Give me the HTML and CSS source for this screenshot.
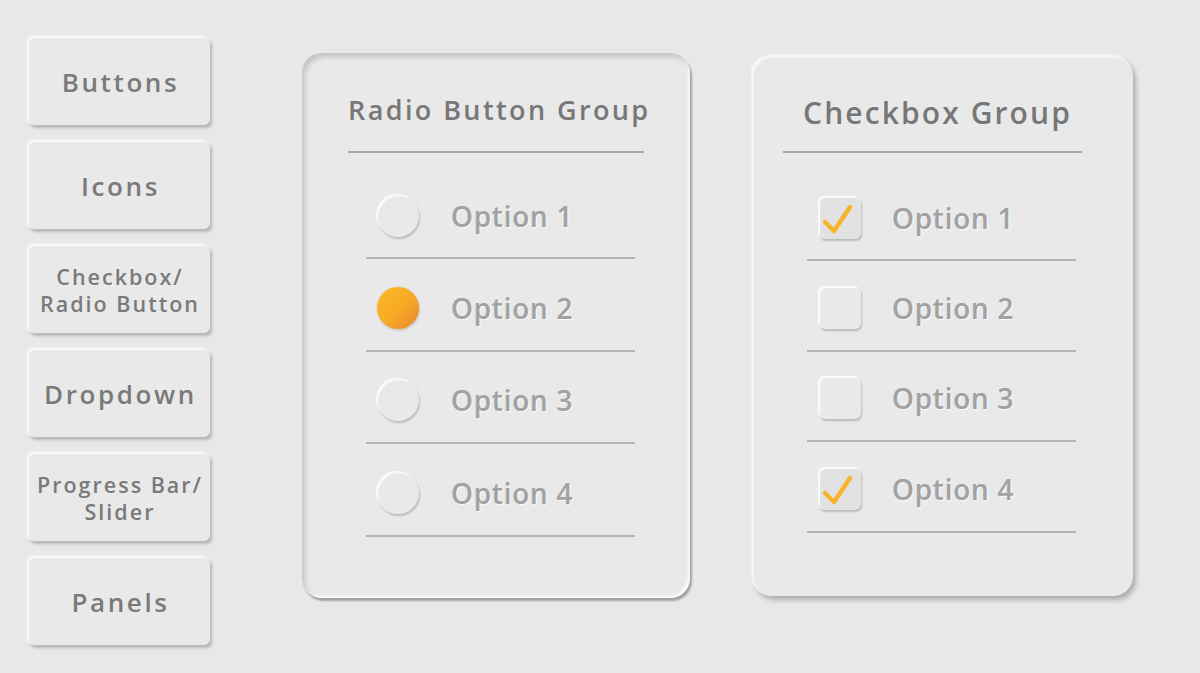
FILE: index.html
```html
<!DOCTYPE html>
<html>
<head>
<meta charset="utf-8">
<link rel="stylesheet" href="styles.css">
</head>
<body>
<div class="page">
  <nav class="sidebar">
    <div class="navbtn big">Buttons</div>
    <div class="navbtn big">Icons</div>
    <div class="navbtn small">Checkbox/<br>Radio Button</div>
    <div class="navbtn big">Dropdown</div>
    <div class="navbtn small">Progress Bar/<br>Slider</div>
    <div class="navbtn big">Panels</div>
  </nav>
  <section class="panel radio-panel">
    <h2 class="title radio-title">Radio Button Group</h2>
    <div class="list radio-list">
      <div class="row"><span class="radio"></span><span class="label">Option 1</span></div>
      <div class="row"><span class="radio on"></span><span class="label">Option 2</span></div>
      <div class="row"><span class="radio"></span><span class="label">Option 3</span></div>
      <div class="row"><span class="radio"></span><span class="label">Option 4</span></div>
    </div>
  </section>
  <section class="panel check-panel">
    <h2 class="title check-title">Checkbox Group</h2>
    <div class="list check-list">
      <div class="row"><span class="check on"><svg viewBox="0 0 42 42" width="42" height="42"><path d="M6 25 L15 34 L31 10" fill="none" stroke="#f7b52c" stroke-width="4.5" stroke-linecap="round" stroke-linejoin="round"/></svg></span><span class="label">Option 1</span></div>
      <div class="row"><span class="check"></span><span class="label">Option 2</span></div>
      <div class="row"><span class="check"></span><span class="label">Option 3</span></div>
      <div class="row"><span class="check on"><svg viewBox="0 0 42 42" width="42" height="42"><path d="M6 25 L15 34 L31 10" fill="none" stroke="#f7b52c" stroke-width="4.5" stroke-linecap="round" stroke-linejoin="round"/></svg></span><span class="label">Option 4</span></div>
    </div>
  </section>
</div>
</body>
</html>
```
FILE: styles.css
```css
* { box-sizing: border-box; }
html, body { margin: 0; padding: 0; }
body {
  width: 1200px;
  height: 673px;
  background: #e8e8e8;
  font-family: "Open Sans", "Noto Sans", sans-serif;
  overflow: hidden;
}
.page {
  display: flex;
  align-items: flex-start;
  padding: 37px 0 0 28px;
}
.sidebar {
  display: flex;
  flex-direction: column;
  gap: 16px;
  width: 182px;
}
.navbtn {
  height: 88px;
  border-radius: 6px;
  background: #e9e9e9;
  box-shadow: 2px 3px 3px rgba(0,0,0,0.22), -1px -1px 2px rgba(255,255,255,0.9), inset 1px 1px 1px rgba(255,255,255,0.8);
  display: flex;
  align-items: center;
  justify-content: center;
  text-align: center;
  color: #7a7a7a;
  font-weight: 600;
  white-space: nowrap;
}
.navbtn.big { font-size: 26px; letter-spacing: 2.6px; padding: 2px 0 0 3px; }
.navbtn.small { font-size: 21.5px; letter-spacing: 2px; line-height: 27px; padding: 2px 0 0 2px; }
.panel {
  border-radius: 20px;
  background: #e9e9e9;
}
.radio-panel {
  margin-left: 92px;
  margin-top: 16px;
  width: 388px;
  height: 545px;
  padding: 0 46px;
  box-shadow: 2px 3px 2px rgba(0,0,0,0.3), inset 3px 4px 5px rgba(0,0,0,0.16), inset -2px -2px 3px rgba(255,255,255,0.9);
}
.check-panel {
  margin-left: 62px;
  margin-top: 19px;
  width: 381px;
  height: 540px;
  padding: 0 51px 0 31px;
  box-shadow: 3px 4px 5px rgba(0,0,0,0.25), -1px -1px 2px rgba(255,255,255,0.9), inset 1px 1px 2px rgba(255,255,255,0.9);
}
.title {
  margin: 0;
  font-weight: 600;
  color: #777;
  text-align: center;
  border-bottom: 2px solid #a8a8a8;
  white-space: nowrap;
}
.radio-title {
  font-size: 27px;
  letter-spacing: 2.4px;
  padding-top: 38px;
  height: 100px;
}
.check-title {
  font-size: 30px;
  letter-spacing: 2.1px;
  padding: 36px 0 0 10px;
  height: 97px;
}
.list { display: flex; flex-direction: column; }
.radio-list { padding: 0 9px 0 18px; }
.check-list { padding: 0 6px 0 24px; }
.row {
  display: flex;
  align-items: center;
  border-bottom: 2px solid #b5b5b5;
}
.radio-list .row { height: 92.5px; padding-left: 11px; padding-top: 7px; }
.radio-list .row:first-child { height: 106px; padding-top: 21px; }
.check-list .row { height: 90.5px; padding-left: 12px; padding-top: 5px; }
.check-list .row:first-child { height: 108px; padding-top: 23px; }
.label {
  font-size: 28px;
  font-weight: 600;
  color: #a2a2a2;
  letter-spacing: 0.7px;
  text-shadow: 1px 1px 1px rgba(255,255,255,0.8), -0.5px -0.5px 0.5px rgba(0,0,0,0.12);
}
.radio {
  width: 42px;
  height: 42px;
  border-radius: 50%;
  background: #e9e9e9;
  margin-right: 32px;
  box-shadow: 1px 2px 2px rgba(0,0,0,0.2), inset 1px 1px 1px rgba(255,255,255,0.9), -1px -1px 1px rgba(255,255,255,0.9);
  flex: none;
}
.radio.on {
  background: linear-gradient(135deg, #fdbb22 0%, #f8aa26 50%, #e6882a 100%);
  box-shadow: 0 0 1px rgba(160,90,10,0.6), 1px 2px 2px rgba(0,0,0,0.1);
}
.check {
  width: 42px;
  height: 42px;
  border-radius: 6px;
  background: #e9e9e9;
  margin-right: 31px;
  box-shadow: 1px 2px 2px rgba(0,0,0,0.2), inset 1px 1px 1px rgba(255,255,255,0.9), -1px -1px 1px rgba(255,255,255,0.9);
  flex: none;
  display: flex;
}
.check.on { background: #e2e2e2; }
.check svg { display: block; }
```
